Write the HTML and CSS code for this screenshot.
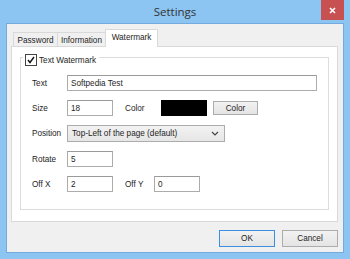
FILE: index.html
```html
<!DOCTYPE html>
<html>

<head>
    <title>Settings</title>
    <link rel="stylesheet" href="styles.css">
</head>

<body>
    <div class="window">
        <div class="titlebar">
            <span></span>
            <div class="title">Settings</div>
            <div class="close">
                <svg width="7" height="7" viewBox="0 0 7 7">
                    <path d="M1 1 L6 6 M6 1 L1 6" stroke="#fff" stroke-width="1.6" fill="none" />
                </svg>
            </div>
        </div>
        <div class="client">
            <div class="tabs">
                <div class="tab tab-password">Password</div>
                <div class="tab tab-info">Information</div>
                <div class="tab tab-active">Watermark</div>
            </div>
            <div class="panel">
                <div class="group">
                    <div class="group-head">
                        <span class="check">
                            <svg width="10" height="10" viewBox="0 0 10 10">
                                <path d="M2 5 L4 7.5 L8 2" stroke="#111" stroke-width="1.4" fill="none" />
                            </svg>
                        </span>
                        <span>Text Watermark</span>
                    </div>
                    <div class="rows">
                        <div class="row">
                            <span class="label">Text</span>
                            <div class="field field-wide">Softpedia Test</div>
                        </div>
                        <div class="row">
                            <span class="label">Size</span>
                            <div class="field field-small">18</div>
                            <span class="label label-color">Color</span>
                            <div class="swatch"></div>
                            <div class="btn btn-color">Color</div>
                        </div>
                        <div class="row row-select">
                            <span class="label">Position</span>
                            <div class="select">
                                <span>Top-Left of the page (default)</span>
                                <svg width="8" height="5" viewBox="0 0 8 5">
                                    <path d="M1 1 L4 4 L7 1" stroke="#444" stroke-width="1.2" fill="none" />
                                </svg>
                            </div>
                        </div>
                        <div class="row">
                            <span class="label">Rotate</span>
                            <div class="field field-small">5</div>
                        </div>
                        <div class="row">
                            <span class="label">Off X</span>
                            <div class="field field-small">2</div>
                            <span class="label label-offy">Off Y</span>
                            <div class="field field-small">0</div>
                        </div>
                    </div>
                </div>
            </div>
            <div class="actions">
                <div class="btn btn-dialog btn-default">OK</div>
                <div class="btn btn-dialog">Cancel</div>
            </div>
        </div>
    </div>
</body>

</html>
```

FILE: styles.css
```css
body {
    margin: 0;
    background: #8cc4f2;
    font-family: "Liberation Sans", Arial, sans-serif;
    font-size: 8.2px;
    color: #1e1e1e;
}

.window {
    width: 350px;
    height: 259px;
    display: flex;
    flex-direction: column;
}

.titlebar {
    height: 23px;
    display: grid;
    grid-template-columns: 1fr auto 1fr;
    align-items: start;
}

.title {
    font-family: "Open Sans", "Liberation Sans", sans-serif;
    font-size: 11.5px;
    color: #333;
    padding-top: 4px;
}

.close {
    justify-self: end;
    margin-right: 6px;
    width: 23px;
    height: 20px;
    background: #c75050;
    display: flex;
    align-items: center;
    justify-content: center;
}

.client {
    margin: 0 6px 6px;
    border: 1px solid #74aade;
    background: #f0f0f0;
    flex: 1;
    padding: 5px 5px 0 4px;
    display: flex;
    flex-direction: column;
}

.tabs {
    height: 17px;
    display: flex;
    align-items: flex-end;
    padding-left: 2px;
}

.tab {
    height: 14px;
    box-sizing: border-box;
    border: 1px solid #d9d9d9;
    border-bottom: none;
    background: #f0f0f0;
    display: flex;
    align-items: center;
    justify-content: center;
    padding-top: 1px;
}

.tab-password {
    width: 45px;
}

.tab-info {
    width: 49px;
    margin-left: -1px;
}

.tab-active {
    width: 53px;
    height: 18px;
    margin-left: -1px;
    margin-bottom: -1px;
    background: #fff;
    position: relative;
    padding-top: 0;
    padding-bottom: 2px;
}

.panel {
    height: 176px;
    box-sizing: border-box;
    border: 1px solid #d9d9d9;
    background: #fff;
    padding: 10px 8px 12px;
}

.group {
    height: 153px;
    box-sizing: border-box;
    border: 1px solid #dcdcdc;
    padding-left: 11px;
}

.group-head {
    margin-top: -7px;
    margin-left: -9px;
    height: 13px;
    display: inline-flex;
    align-items: center;
    gap: 2px;
    padding: 0 3px 0 2px;
    background: #fff;
}

.check {
    width: 12px;
    height: 12px;
    box-sizing: border-box;
    border: 1px solid #444;
    background: #fff;
    display: flex;
    align-items: center;
    justify-content: center;
}

.rows {
    margin-top: 8px;
    display: flex;
    flex-direction: column;
    gap: 9px;
}

.row {
    height: 16px;
    display: flex;
    align-items: center;
}

.row-select {
    height: 17px;
}

.label {
    width: 35px;
}

.label-color {
    width: 36px;
    margin-left: 12px;
}

.label-offy {
    width: 29px;
    margin-left: 12px;
}

.field {
    height: 16px;
    box-sizing: border-box;
    border: 1px solid #acacac;
    border-top-color: #9a9a9a;
    background: #fff;
    padding-left: 3px;
    display: flex;
    align-items: center;
}

.field-wide {
    width: 250px;
}

.field-small {
    width: 46px;
}

.swatch {
    width: 46px;
    height: 16px;
    background: #000;
}

.btn {
    box-sizing: border-box;
    border: 1px solid #acacac;
    background: linear-gradient(#f2f2f2, #e4e4e4);
    display: flex;
    align-items: center;
    justify-content: center;
}

.btn-color {
    width: 45px;
    height: 14px;
    margin-left: 6px;
}

.select {
    width: 158px;
    height: 17px;
    box-sizing: border-box;
    border: 1px solid #acacac;
    background: linear-gradient(#f2f2f2, #e6e6e6);
    display: flex;
    align-items: center;
    justify-content: space-between;
    padding: 0 5px 0 4px;
}

.actions {
    margin-top: 8px;
    display: flex;
    justify-content: flex-end;
    gap: 7px;
}

.btn-dialog {
    width: 56px;
    height: 17px;
}

.btn-default {
    border-color: #3c8ee0;
}
```
